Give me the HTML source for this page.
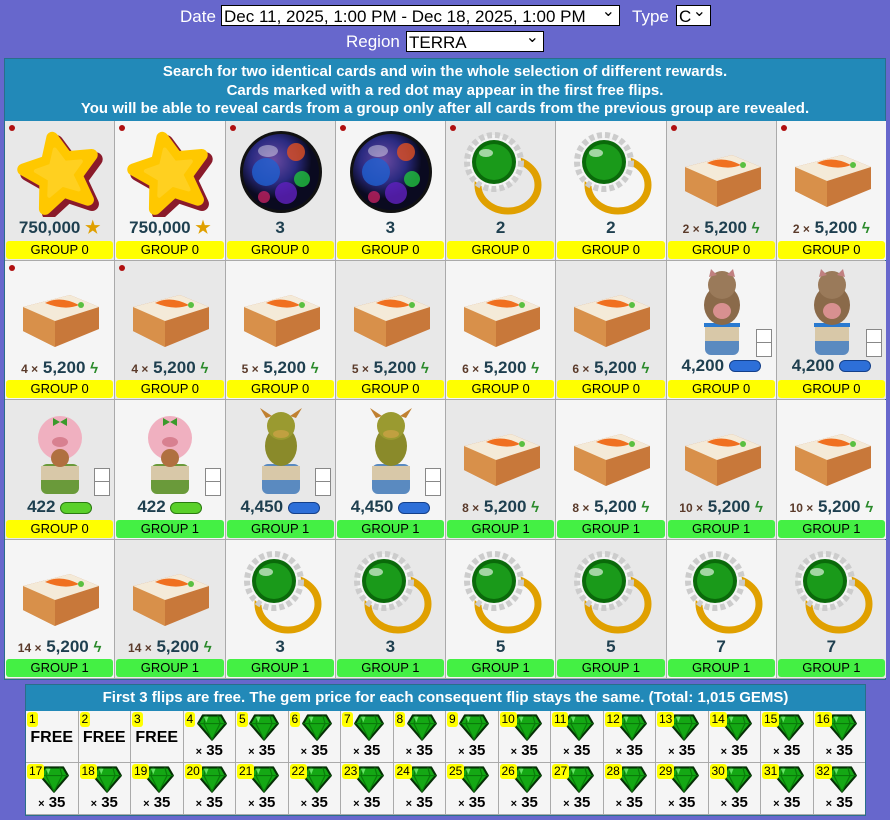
<!DOCTYPE html>
<html><head><meta charset="utf-8"><style>
body{margin:0;background:#6767cc;font-family:"Liberation Sans",sans-serif;width:890px;height:820px;overflow:hidden;position:relative}
.top{position:absolute;color:#fff;font-size:17px}
.sel{position:absolute;background:#fff;border:1px solid #000;color:#000;font-size:17px;height:21px;line-height:21px;padding-left:2px;box-sizing:border-box}
.sel:after{content:"⌄";position:absolute;right:4px;top:-5px;font-size:16px}
#main{position:absolute;left:4px;top:58px;width:882px;height:622px;background:#aaa;border:1px solid #2a6e8a;box-sizing:border-box}
.hd{background:#2289b8;color:#fff;font-weight:bold;font-size:15px;text-align:center;line-height:18.5px;height:62px;padding-top:4px;box-sizing:border-box}
.grid{display:grid;grid-template-columns:repeat(8,109.25px);grid-template-rows:repeat(4,138.5px);gap:1px}
.c{position:relative;background:#f5f5f5;overflow:hidden}
.g{background:#e8e8e8}
.c svg.i{position:absolute;left:10px;top:6px;width:90px;height:90px}
.dot{position:absolute;left:4px;top:4px;width:6px;height:6px;border-radius:50%;background:#b01010}
.v{position:absolute;left:0;right:0;top:97px;text-align:center;font-weight:bold;font-size:17px;color:#1e3f4f}
.v small{font-size:12px;color:#5a3a2a;font-weight:bold}
.b{position:absolute;left:1px;right:1px;bottom:1px;height:18px;line-height:18px;text-align:center;font-size:13px;color:#000;border-radius:3px}
.y{background:#ffff00}.gr{background:#44f044}
.bolt{color:#2a8a2a;font-size:15px}
.pill{display:inline-block;width:30px;height:10px;border-radius:6px;background:#2d6fd8;border:1px solid #14408a;vertical-align:middle}
.pg{background:#5ad02a;border-color:#2a7a10}
.box{position:absolute;right:4px;top:68px;width:14px;height:26px;border:1px solid #888;background:#fff}
.box:after{content:"";position:absolute;left:0;right:0;top:12px;border-top:1px solid #888}
#bot{position:absolute;left:25px;top:684px;width:841px;height:132px;background:#aaa;border:1px solid #2a6e8a;box-sizing:border-box}
.bh{background:#2289b8;color:#fff;font-weight:bold;font-size:15px;text-align:center;height:26px;line-height:26px}
.bg{display:grid;grid-template-columns:repeat(16,51.5px);grid-template-rows:51px 51px;gap:1px}
.f{position:relative;background:#f5f5f5;text-align:center}
.f .n{position:absolute;left:1px;top:1px;background:#ffff00;font-size:12px;padding:0 2px;border-radius:3px;line-height:15px;z-index:1}
.f .fr{position:absolute;left:0;right:0;top:18px;font-weight:bold;font-size:16px}
.f svg{position:absolute;left:13px;top:2px;width:30px;height:28px}
.f .x{position:absolute;left:0;right:0;top:31px;font-weight:bold;font-size:15px}
.f .x i{font-style:normal;font-size:11px}
</style></head><body>
<svg width="0" height="0" style="position:absolute">
<defs>
<radialGradient id="ballg" cx="40%" cy="35%"><stop offset="0" stop-color="#6a4aa0"/><stop offset=".6" stop-color="#2a2a80"/><stop offset="1" stop-color="#0a0a20"/></radialGradient>
<symbol id="star" viewBox="0 0 90 90"><g transform="rotate(-12 45 47)"><path d="M45 10 L55 32 L80 35 L61 52 L67 78 L45 65 L23 78 L29 52 L10 35 L35 32Z" fill="#8a1a2a" stroke="#8a1a2a" stroke-width="14" stroke-linejoin="round" transform="translate(3,5)"/><path d="M45 10 L55 32 L80 35 L61 52 L67 78 L45 65 L23 78 L29 52 L10 35 L35 32Z" fill="#f09000" stroke="#ffc800" stroke-width="12" stroke-linejoin="round"/><path d="M45 22 L52 37 L68 39 L56 50 L60 66 L45 58 L30 66 L34 50 L22 39 L38 37Z" fill="#ffd020" stroke="#ffd020" stroke-width="4" stroke-linejoin="round"/></g></symbol>
<symbol id="ball" viewBox="0 0 90 90"><circle cx="45" cy="45" r="41" fill="#111"/><circle cx="45" cy="45" r="38" fill="url(#ballg)"/><circle cx="30" cy="45" r="14" fill="#2060d0" opacity=".8"/><circle cx="60" cy="25" r="9" fill="#e05020" opacity=".8"/><circle cx="66" cy="52" r="8" fill="#20c040" opacity=".8"/><circle cx="50" cy="66" r="11" fill="#6020c0" opacity=".8"/><circle cx="28" cy="70" r="6" fill="#c02060" opacity=".8"/><ellipse cx="32" cy="24" rx="10" ry="6" fill="#fff" opacity=".4"/></symbol>
<symbol id="ring" viewBox="0 0 90 90"><ellipse cx="52" cy="58" rx="30" ry="26" fill="none" stroke="#e0a000" stroke-width="7"/><circle cx="38" cy="35" r="27" fill="#f4f4f4" stroke="#ccc" stroke-width="6" stroke-dasharray="5 3"/><circle cx="38" cy="35" r="22" fill="#0a6a0a"/><circle cx="38" cy="35" r="18" fill="#1a9a1a"/><ellipse cx="30" cy="26" rx="7" ry="4" fill="#fff" opacity=".6"/></symbol>
<symbol id="cake" viewBox="0 0 90 90"><path d="M8 40 L55 28 L84 40 L84 62 L40 80 L8 64Z" fill="#c8783a"/><path d="M8 40 L40 52 L40 80 L8 64Z" fill="#d8904a"/><path d="M8 40 L55 28 L84 40 L40 54Z" fill="#f4ead8"/><path d="M30 36 Q45 28 64 38 Q50 44 30 36Z" fill="#f07020"/><circle cx="66" cy="38" r="3" fill="#5ac040"/></symbol>
<symbol id="cat" viewBox="0 0 90 90"><rect x="28" y="58" width="34" height="30" rx="6" fill="#5a8ac0"/><rect x="28" y="58" width="34" height="16" fill="#d8c8a8"/><rect x="27" y="56" width="36" height="4" fill="#2a7ad0"/><ellipse cx="45" cy="38" rx="18" ry="20" fill="#8a6a4a"/><circle cx="45" cy="18" r="14" fill="#9a7a5a"/><path d="M32 10 L34 2 L40 8Z M58 10 L56 2 L50 8Z" fill="#c08080"/><ellipse cx="45" cy="44" rx="9" ry="8" fill="#d89090"/></symbol>
<symbol id="pig" viewBox="0 0 90 90"><rect x="26" y="58" width="38" height="30" rx="6" fill="#6a9a3a"/><rect x="26" y="60" width="38" height="14" fill="#d8c8a8"/><circle cx="45" cy="32" r="22" fill="#f0b0c0"/><ellipse cx="45" cy="36" rx="8" ry="5" fill="#d88090"/><path d="M38 12 L45 16 L52 12 L52 20 L45 16 L38 20Z" fill="#3a9a2a"/><circle cx="45" cy="52" r="9" fill="#b07040"/></symbol>
<symbol id="drag" viewBox="0 0 90 90"><rect x="26" y="58" width="38" height="30" rx="6" fill="#5a8ac0"/><rect x="26" y="60" width="38" height="14" fill="#d8c8a8"/><ellipse cx="45" cy="40" rx="16" ry="20" fill="#8a8a2a"/><circle cx="45" cy="20" r="14" fill="#9a9a30"/><path d="M30 12 L24 2 L36 10Z M60 12 L66 2 L54 10Z" fill="#c08030"/><ellipse cx="45" cy="28" rx="8" ry="4" fill="#c0a040"/></symbol>
<symbol id="gem" viewBox="0 0 26 24"><path d="M5 2 H21 L25 9 L13 23 L1 9Z" fill="#14a814" stroke="#063006" stroke-width="1.8" stroke-linejoin="round"/><path d="M1 9 H25 M8 2 L6 9 L13 23 M18 2 L20 9 L13 23" stroke="#0a7a0a" stroke-width="1" fill="none"/><path d="M6 3 L10 3 L8 8Z" fill="#8aff8a" opacity=".7"/></symbol>
</defs></svg>

<span class="top" style="left:180px;top:7px">Date</span>
<div class="sel" style="left:221px;top:5px;width:399px">Dec 11, 2025, 1:00 PM - Dec 18, 2025, 1:00 PM</div>
<span class="top" style="left:632px;top:7px">Type</span>
<div class="sel" style="left:676px;top:5px;width:35px">C</div>
<span class="top" style="left:346px;top:32px">Region</span>
<div class="sel" style="left:406px;top:31px;width:138px">TERRA</div>

<div id="main">
<div class="hd">Search for two identical cards and win the whole selection of different rewards.<br>Cards marked with a red dot may appear in the first free flips.<br>You will be able to reveal cards from a group only after all cards from the previous group are revealed.</div>
<div class="grid">
<div class="c g"><span class="dot"></span><svg class="i"><use href="#star"/></svg><div class="v">750,000 <span style="color:#e0a000">★</span></div><div class="b y">GROUP 0</div></div>
<div class="c"><span class="dot"></span><svg class="i"><use href="#star"/></svg><div class="v">750,000 <span style="color:#e0a000">★</span></div><div class="b y">GROUP 0</div></div>
<div class="c g"><span class="dot"></span><svg class="i"><use href="#ball"/></svg><div class="v">3</div><div class="b y">GROUP 0</div></div>
<div class="c"><span class="dot"></span><svg class="i"><use href="#ball"/></svg><div class="v">3</div><div class="b y">GROUP 0</div></div>
<div class="c g"><span class="dot"></span><svg class="i"><use href="#ring"/></svg><div class="v">2</div><div class="b y">GROUP 0</div></div>
<div class="c"><svg class="i"><use href="#ring"/></svg><div class="v">2</div><div class="b y">GROUP 0</div></div>
<div class="c g"><span class="dot"></span><svg class="i"><use href="#cake"/></svg><div class="v"><small>2 ×</small> 5,200 <span class="bolt">ϟ</span></div><div class="b y">GROUP 0</div></div>
<div class="c"><span class="dot"></span><svg class="i"><use href="#cake"/></svg><div class="v"><small>2 ×</small> 5,200 <span class="bolt">ϟ</span></div><div class="b y">GROUP 0</div></div>

<div class="c"><span class="dot"></span><svg class="i"><use href="#cake"/></svg><div class="v"><small>4 ×</small> 5,200 <span class="bolt">ϟ</span></div><div class="b y">GROUP 0</div></div>
<div class="c g"><span class="dot"></span><svg class="i"><use href="#cake"/></svg><div class="v"><small>4 ×</small> 5,200 <span class="bolt">ϟ</span></div><div class="b y">GROUP 0</div></div>
<div class="c"><svg class="i"><use href="#cake"/></svg><div class="v"><small>5 ×</small> 5,200 <span class="bolt">ϟ</span></div><div class="b y">GROUP 0</div></div>
<div class="c g"><svg class="i"><use href="#cake"/></svg><div class="v"><small>5 ×</small> 5,200 <span class="bolt">ϟ</span></div><div class="b y">GROUP 0</div></div>
<div class="c"><svg class="i"><use href="#cake"/></svg><div class="v"><small>6 ×</small> 5,200 <span class="bolt">ϟ</span></div><div class="b y">GROUP 0</div></div>
<div class="c g"><svg class="i"><use href="#cake"/></svg><div class="v"><small>6 ×</small> 5,200 <span class="bolt">ϟ</span></div><div class="b y">GROUP 0</div></div>
<div class="c"><svg class="i"><use href="#cat"/></svg><span class="box"></span><div class="v" style="top:95px">4,200 <span class="pill"></span></div><div class="b y">GROUP 0</div></div>
<div class="c g"><svg class="i"><use href="#cat"/></svg><span class="box"></span><div class="v" style="top:95px">4,200 <span class="pill"></span></div><div class="b y">GROUP 0</div></div>

<div class="c g"><svg class="i"><use href="#pig"/></svg><span class="box"></span><div class="v">422 <span class="pill pg"></span></div><div class="b y">GROUP 0</div></div>
<div class="c"><svg class="i"><use href="#pig"/></svg><span class="box"></span><div class="v">422 <span class="pill pg"></span></div><div class="b gr">GROUP 1</div></div>
<div class="c g"><svg class="i"><use href="#drag"/></svg><span class="box"></span><div class="v">4,450 <span class="pill"></span></div><div class="b gr">GROUP 1</div></div>
<div class="c"><svg class="i"><use href="#drag"/></svg><span class="box"></span><div class="v">4,450 <span class="pill"></span></div><div class="b gr">GROUP 1</div></div>
<div class="c g"><svg class="i"><use href="#cake"/></svg><div class="v"><small>8 ×</small> 5,200 <span class="bolt">ϟ</span></div><div class="b gr">GROUP 1</div></div>
<div class="c"><svg class="i"><use href="#cake"/></svg><div class="v"><small>8 ×</small> 5,200 <span class="bolt">ϟ</span></div><div class="b gr">GROUP 1</div></div>
<div class="c g"><svg class="i"><use href="#cake"/></svg><div class="v"><small>10 ×</small> 5,200 <span class="bolt">ϟ</span></div><div class="b gr">GROUP 1</div></div>
<div class="c"><svg class="i"><use href="#cake"/></svg><div class="v"><small>10 ×</small> 5,200 <span class="bolt">ϟ</span></div><div class="b gr">GROUP 1</div></div>

<div class="c"><svg class="i"><use href="#cake"/></svg><div class="v"><small>14 ×</small> 5,200 <span class="bolt">ϟ</span></div><div class="b gr">GROUP 1</div></div>
<div class="c g"><svg class="i"><use href="#cake"/></svg><div class="v"><small>14 ×</small> 5,200 <span class="bolt">ϟ</span></div><div class="b gr">GROUP 1</div></div>
<div class="c"><svg class="i"><use href="#ring"/></svg><div class="v">3</div><div class="b gr">GROUP 1</div></div>
<div class="c g"><svg class="i"><use href="#ring"/></svg><div class="v">3</div><div class="b gr">GROUP 1</div></div>
<div class="c"><svg class="i"><use href="#ring"/></svg><div class="v">5</div><div class="b gr">GROUP 1</div></div>
<div class="c g"><svg class="i"><use href="#ring"/></svg><div class="v">5</div><div class="b gr">GROUP 1</div></div>
<div class="c"><svg class="i"><use href="#ring"/></svg><div class="v">7</div><div class="b gr">GROUP 1</div></div>
<div class="c g"><svg class="i"><use href="#ring"/></svg><div class="v">7</div><div class="b gr">GROUP 1</div></div>
</div></div>

<div id="bot">
<div class="bh">First 3 flips are free. The gem price for each consequent flip stays the same. (Total: 1,015 GEMS)</div>
<div class="bg">
<div class="f g"><span class="n">1</span><div class="fr">FREE</div></div>
<div class="f"><span class="n">2</span><div class="fr">FREE</div></div>
<div class="f g"><span class="n">3</span><div class="fr">FREE</div></div>
<div class="f"><span class="n">4</span><svg><use href="#gem"/></svg><div class="x"><i>×</i> 35</div></div>
<div class="f g"><span class="n">5</span><svg><use href="#gem"/></svg><div class="x"><i>×</i> 35</div></div>
<div class="f"><span class="n">6</span><svg><use href="#gem"/></svg><div class="x"><i>×</i> 35</div></div>
<div class="f g"><span class="n">7</span><svg><use href="#gem"/></svg><div class="x"><i>×</i> 35</div></div>
<div class="f"><span class="n">8</span><svg><use href="#gem"/></svg><div class="x"><i>×</i> 35</div></div>
<div class="f g"><span class="n">9</span><svg><use href="#gem"/></svg><div class="x"><i>×</i> 35</div></div>
<div class="f"><span class="n">10</span><svg><use href="#gem"/></svg><div class="x"><i>×</i> 35</div></div>
<div class="f g"><span class="n">11</span><svg><use href="#gem"/></svg><div class="x"><i>×</i> 35</div></div>
<div class="f"><span class="n">12</span><svg><use href="#gem"/></svg><div class="x"><i>×</i> 35</div></div>
<div class="f g"><span class="n">13</span><svg><use href="#gem"/></svg><div class="x"><i>×</i> 35</div></div>
<div class="f"><span class="n">14</span><svg><use href="#gem"/></svg><div class="x"><i>×</i> 35</div></div>
<div class="f g"><span class="n">15</span><svg><use href="#gem"/></svg><div class="x"><i>×</i> 35</div></div>
<div class="f"><span class="n">16</span><svg><use href="#gem"/></svg><div class="x"><i>×</i> 35</div></div>
<div class="f"><span class="n">17</span><svg><use href="#gem"/></svg><div class="x"><i>×</i> 35</div></div>
<div class="f g"><span class="n">18</span><svg><use href="#gem"/></svg><div class="x"><i>×</i> 35</div></div>
<div class="f"><span class="n">19</span><svg><use href="#gem"/></svg><div class="x"><i>×</i> 35</div></div>
<div class="f g"><span class="n">20</span><svg><use href="#gem"/></svg><div class="x"><i>×</i> 35</div></div>
<div class="f"><span class="n">21</span><svg><use href="#gem"/></svg><div class="x"><i>×</i> 35</div></div>
<div class="f g"><span class="n">22</span><svg><use href="#gem"/></svg><div class="x"><i>×</i> 35</div></div>
<div class="f"><span class="n">23</span><svg><use href="#gem"/></svg><div class="x"><i>×</i> 35</div></div>
<div class="f g"><span class="n">24</span><svg><use href="#gem"/></svg><div class="x"><i>×</i> 35</div></div>
<div class="f"><span class="n">25</span><svg><use href="#gem"/></svg><div class="x"><i>×</i> 35</div></div>
<div class="f g"><span class="n">26</span><svg><use href="#gem"/></svg><div class="x"><i>×</i> 35</div></div>
<div class="f"><span class="n">27</span><svg><use href="#gem"/></svg><div class="x"><i>×</i> 35</div></div>
<div class="f g"><span class="n">28</span><svg><use href="#gem"/></svg><div class="x"><i>×</i> 35</div></div>
<div class="f"><span class="n">29</span><svg><use href="#gem"/></svg><div class="x"><i>×</i> 35</div></div>
<div class="f g"><span class="n">30</span><svg><use href="#gem"/></svg><div class="x"><i>×</i> 35</div></div>
<div class="f"><span class="n">31</span><svg><use href="#gem"/></svg><div class="x"><i>×</i> 35</div></div>
<div class="f g"><span class="n">32</span><svg><use href="#gem"/></svg><div class="x"><i>×</i> 35</div></div>
</div></div>
</body></html>
